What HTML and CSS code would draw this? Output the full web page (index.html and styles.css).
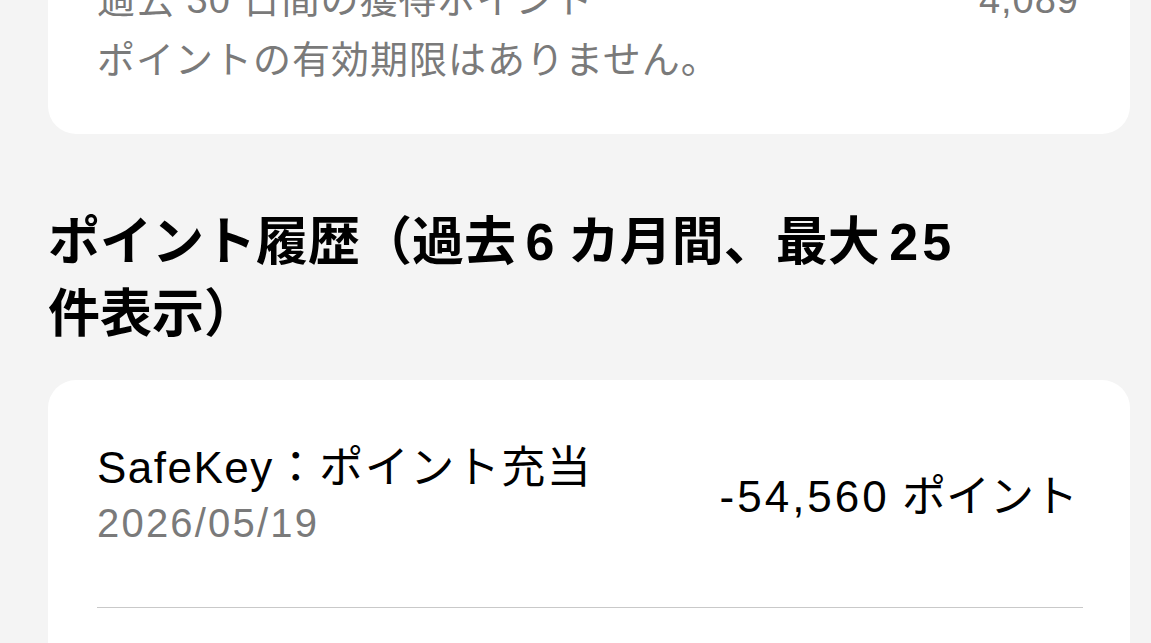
FILE: index.html
```html
<!DOCTYPE html>
<html lang="ja">
<head>
<meta charset="utf-8">
<title>ポイント履歴</title>
<link rel="stylesheet" href="styles.css">
</head>
<body>
<main class="page">
  <section class="card summary">
    <div class="summary-row">
      <span class="summary-label">過去 30 日間の獲得ポイント</span>
      <span class="summary-value">4,089</span>
    </div>
    <p class="summary-note">ポイントの有効期限はありません。</p>
  </section>

  <h2 class="section-title">ポイント履歴（過去 <span class="num">6</span> カ月間、最大 <span class="num">25</span>件表示）</h2>

  <section class="card history">
    <div class="history-row">
      <div class="history-main">
        <div class="history-title">SafeKey：ポイント充当</div>
        <div class="history-date">2026/05/19</div>
      </div>
      <div class="history-amount"><span class="amount-num">-54,560</span> ポイント</div>
    </div>
  </section>
</main>
</body>
</html>
```

FILE: styles.css
```css
html, body {
  margin: 0;
  padding: 0;
}

body {
  background: #f4f4f4;
  font-family: "Liberation Sans", "Noto Sans CJK JP", sans-serif;
  color: #000;
  overflow: hidden;
}

.page {
  display: flex;
  flex-direction: column;
  padding: 0 21px 0 48px;
  margin-top: -52px;
}

.card {
  background: #ffffff;
  border-radius: 28px;
}

.summary {
  padding: 30px 51px 52px 49px;
}

.summary-row {
  display: flex;
  justify-content: space-between;
  font-size: 38px;
  line-height: 44px;
  letter-spacing: 1px;
  color: #7a7a7a;
}

.summary-note {
  margin: 16px 0 0;
  font-size: 38px;
  line-height: 44px;
  letter-spacing: 1px;
  color: #7a7a7a;
}

.section-title {
  margin: 72px 0 0;
  width: 950px;
  font-family: "Liberation Sans", "Noto Sans CJK JP", sans-serif;
  font-weight: 700;
  font-size: 52px;
  line-height: 72px;
  word-spacing: -5px;
  color: #000;
}

.section-title .num {
  letter-spacing: 4px;
}

.history {
  margin-top: 30px;
  padding: 63px 47px 80px 49px;
}

.history-row {
  display: flex;
  justify-content: space-between;
  align-items: center;
  padding-bottom: 62px;
  border-bottom: 1px solid #c9c9c9;
  height: 102px;
}

.history-title {
  font-size: 44px;
  line-height: 48px;
  letter-spacing: 1.5px;
}

.history-date {
  margin-top: 9px;
  font-size: 40px;
  line-height: 44px;
  letter-spacing: 2.2px;
  color: #7a7a7a;
}

.history-amount {
  margin-top: 6px;
  margin-right: 5px;
  font-size: 44px;
  line-height: 48px;
}

.amount-num {
  letter-spacing: 3px;
}
```
